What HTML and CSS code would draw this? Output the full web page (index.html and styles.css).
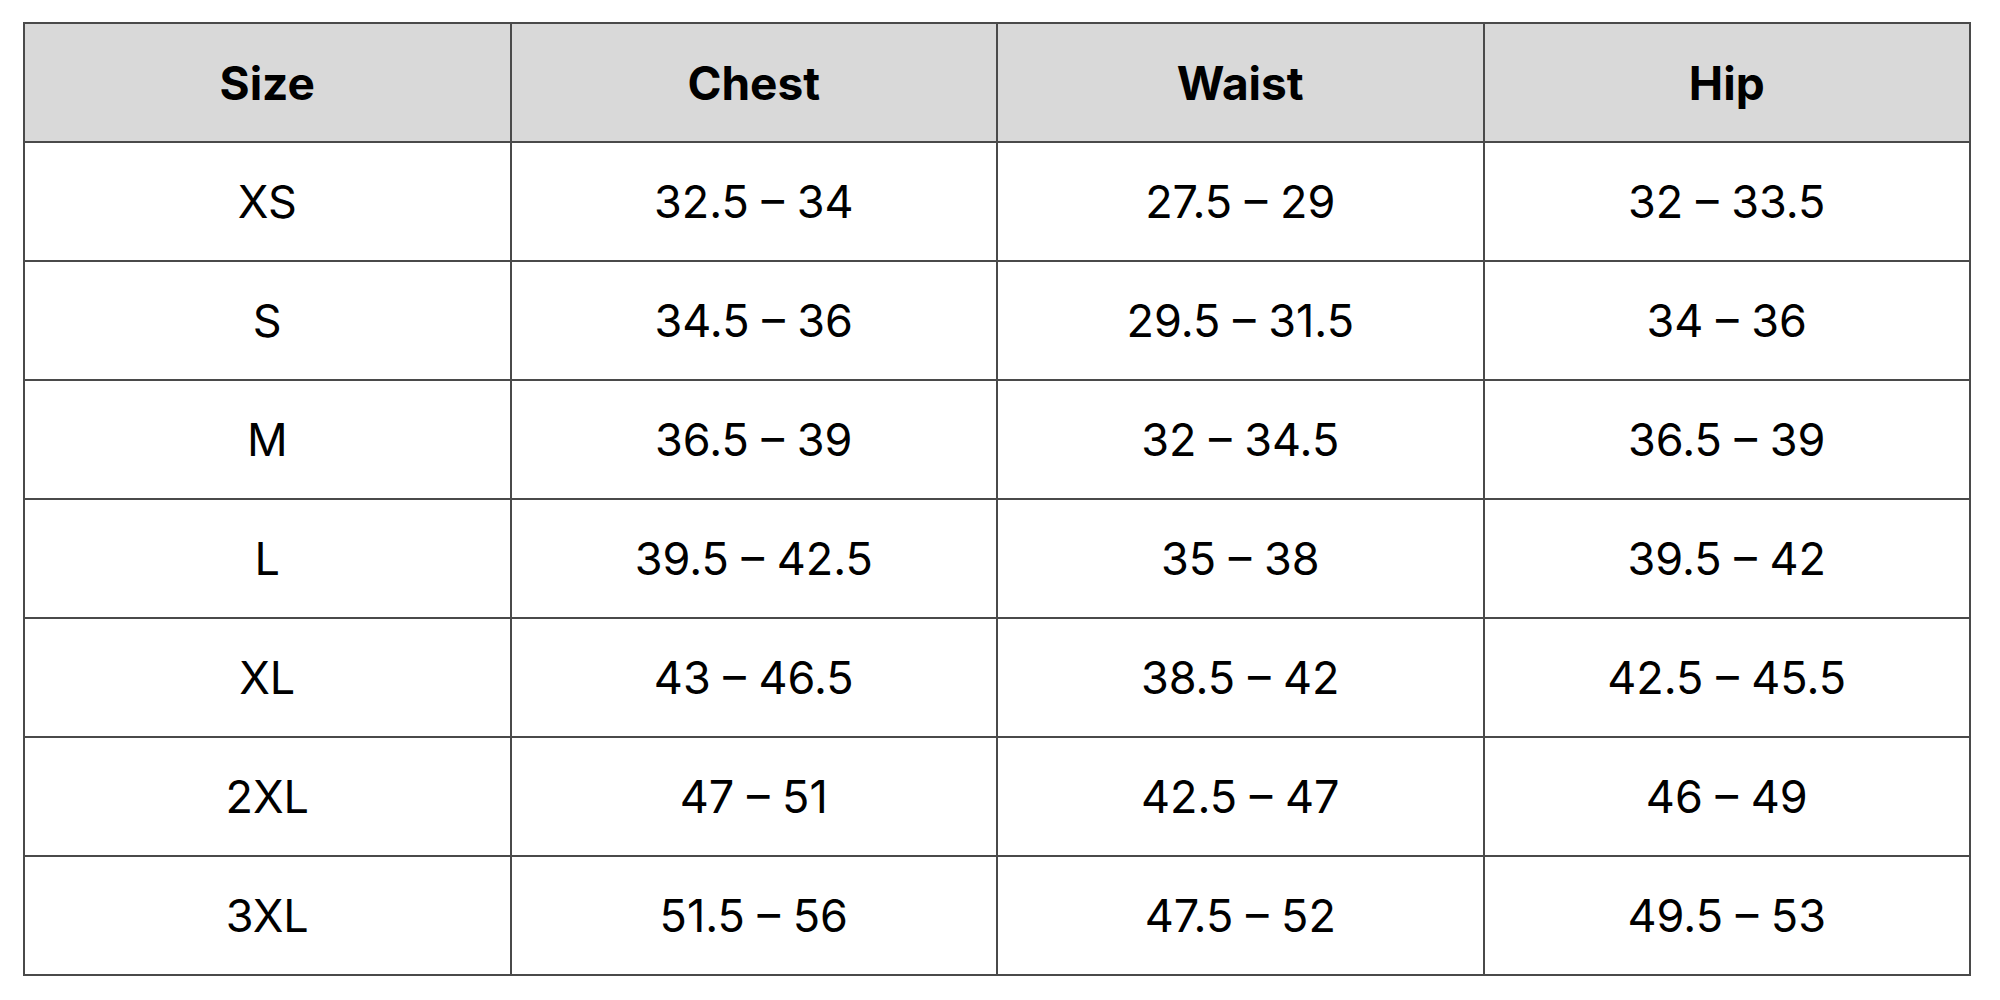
FILE: index.html
```html
<!DOCTYPE html>
<html>
<head>
<meta charset="utf-8">
<link rel="stylesheet" href="styles.css">
</head>
<body>
<table class="size-chart">
  <thead>
    <tr><th>Size</th><th>Chest</th><th>Waist</th><th>Hip</th></tr>
  </thead>
  <tbody>
    <tr><td>XS</td><td>32.5 – 34</td><td>27.5 – 29</td><td>32 – 33.5</td></tr>
    <tr><td>S</td><td>34.5 – 36</td><td>29.5 – 31.5</td><td>34 – 36</td></tr>
    <tr><td>M</td><td>36.5 – 39</td><td>32 – 34.5</td><td>36.5 – 39</td></tr>
    <tr><td>L</td><td>39.5 – 42.5</td><td>35 – 38</td><td>39.5 – 42</td></tr>
    <tr><td>XL</td><td>43 – 46.5</td><td>38.5 – 42</td><td>42.5 – 45.5</td></tr>
    <tr><td>2XL</td><td>47 – 51</td><td>42.5 – 47</td><td>46 – 49</td></tr>
    <tr><td>3XL</td><td>51.5 – 56</td><td>47.5 – 52</td><td>49.5 – 53</td></tr>
  </tbody>
</table>
</body>
</html>
```

FILE: styles.css
```css
html, body {
  margin: 0;
  padding: 0;
  background: #ffffff;
}
body {
  padding: 22px 0 0 23px;
  font-family: Inter, "Noto Sans", "Liberation Sans", sans-serif;
  color: #000;
}
.size-chart {
  width: 1948px;
  border-collapse: collapse;
  table-layout: fixed;
}
.size-chart th,
.size-chart td {
  border: 2px solid #4a4a4a;
  text-align: center;
  vertical-align: middle;
  height: 119px;
  padding: 0;
  box-sizing: border-box;
}
.size-chart th {
  background: #d9d9d9;
  font-weight: 700;
  font-size: 46px;
}
.size-chart td {
  font-weight: 400;
  font-size: 45px;
}
```
